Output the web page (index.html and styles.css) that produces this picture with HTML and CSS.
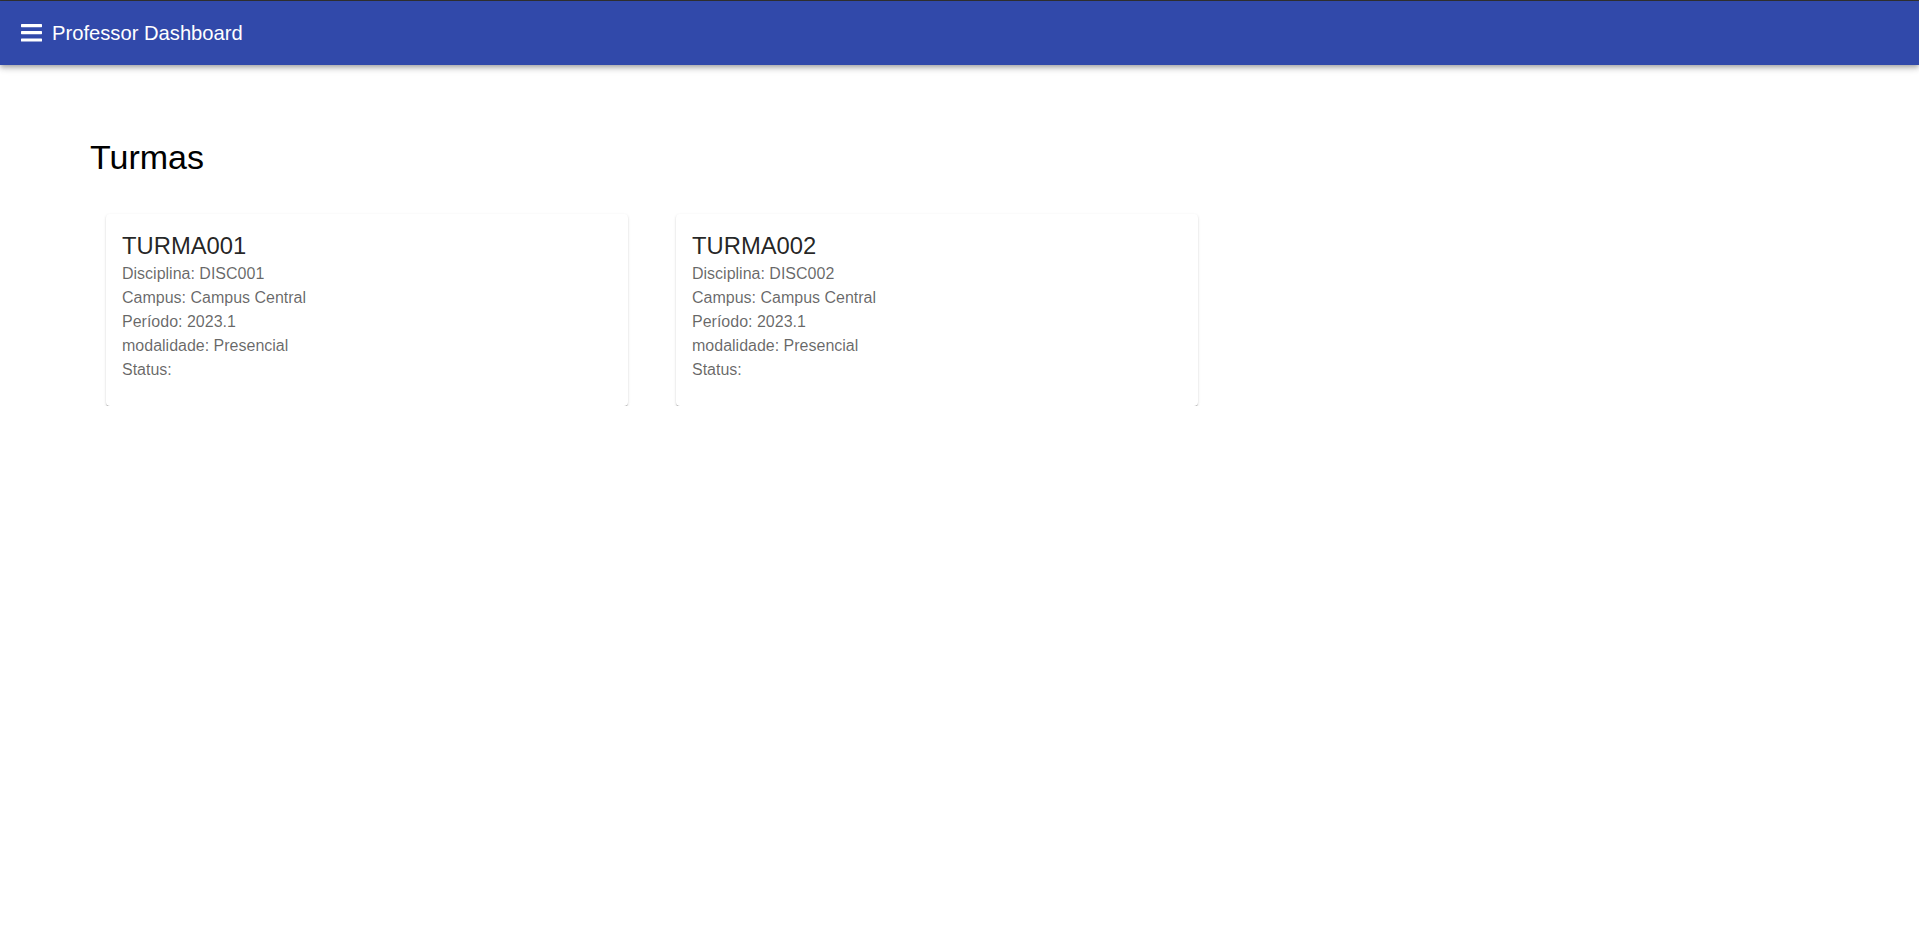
FILE: index.html
```html
<!DOCTYPE html>
<html lang="pt">
<head>
<meta charset="utf-8">
<title>Professor Dashboard</title>
<link rel="stylesheet" href="styles.css">
</head>
<body>
<div class="frame-line"></div>
<header class="appbar">
  <button class="menu-btn" aria-label="menu">
    <svg width="21" height="18" viewBox="0 0 21 18" aria-hidden="true">
      <rect x="0" y="0" width="21" height="3.2" rx="0.6" fill="#fff"/>
      <rect x="0" y="7" width="21" height="3.2" rx="0.6" fill="#fff"/>
      <rect x="0" y="14.4" width="21" height="3.2" rx="0.6" fill="#fff"/>
    </svg>
  </button>
  <span class="appbar-title">Professor Dashboard</span>
</header>
<main class="content">
  <h1 class="page-title">Turmas</h1>
  <div class="card-grid">
    <div class="card">
      <div class="card-title">TURMA001</div>
      <div class="card-line">Disciplina: DISC001</div>
      <div class="card-line">Campus: Campus Central</div>
      <div class="card-line">Período: 2023.1</div>
      <div class="card-line">modalidade: Presencial</div>
      <div class="card-line">Status: </div>
    </div>
    <div class="card">
      <div class="card-title">TURMA002</div>
      <div class="card-line">Disciplina: DISC002</div>
      <div class="card-line">Campus: Campus Central</div>
      <div class="card-line">Período: 2023.1</div>
      <div class="card-line">modalidade: Presencial</div>
      <div class="card-line">Status: </div>
    </div>
  </div>
</main>
</body>
</html>
```

FILE: styles.css
```css
* { box-sizing: border-box; }

html, body {
  margin: 0;
  padding: 0;
  background: #ffffff;
  font-family: "Liberation Sans", Arial, Helvetica, sans-serif;
}

.frame-line {
  height: 1px;
  background: #333333;
}

.appbar {
  height: 64px;
  background: #3149aa;
  color: #ffffff;
  display: flex;
  align-items: center;
  padding-left: 21px;
  box-shadow: 0px 2px 4px -1px rgba(0,0,0,0.2), 0px 4px 5px 0px rgba(0,0,0,0.14), 0px 1px 10px 0px rgba(0,0,0,0.12);
  position: relative;
  z-index: 2;
}

.menu-btn {
  background: none;
  border: 0;
  padding: 0;
  margin: 0 10px 0 0;
  width: 21px;
  height: 18px;
  display: flex;
  cursor: pointer;
}

.menu-btn svg { display: block; }

.appbar-title {
  font-size: 20.2px;
  line-height: 24px;
  font-weight: 400;
  letter-spacing: 0;
}

.content {
  padding: 72px 0 0 90px;
}

.page-title {
  margin: 0;
  font-size: 34px;
  line-height: 40px;
  font-weight: 400;
  color: #000000;
}

.card-grid {
  margin-top: 37px;
  padding-left: 16px;
  display: grid;
  grid-template-columns: repeat(2, 522px);
  column-gap: 48px;
}

.card {
  background: #ffffff;
  border-radius: 4px;
  padding: 16px 16px 24px 16px;
  box-shadow: 0px 2px 1px -1px rgba(0,0,0,0.28), 0px 1px 1px 0px rgba(0,0,0,0.16), 0px 1px 3px 0px rgba(0,0,0,0.12);
}

.card-title {
  font-size: 23.8px;
  line-height: 32px;
  color: rgba(0,0,0,0.87);
}

.card-line {
  font-size: 16px;
  line-height: 24px;
  color: rgba(0,0,0,0.6);
  min-height: 24px;
}
```
